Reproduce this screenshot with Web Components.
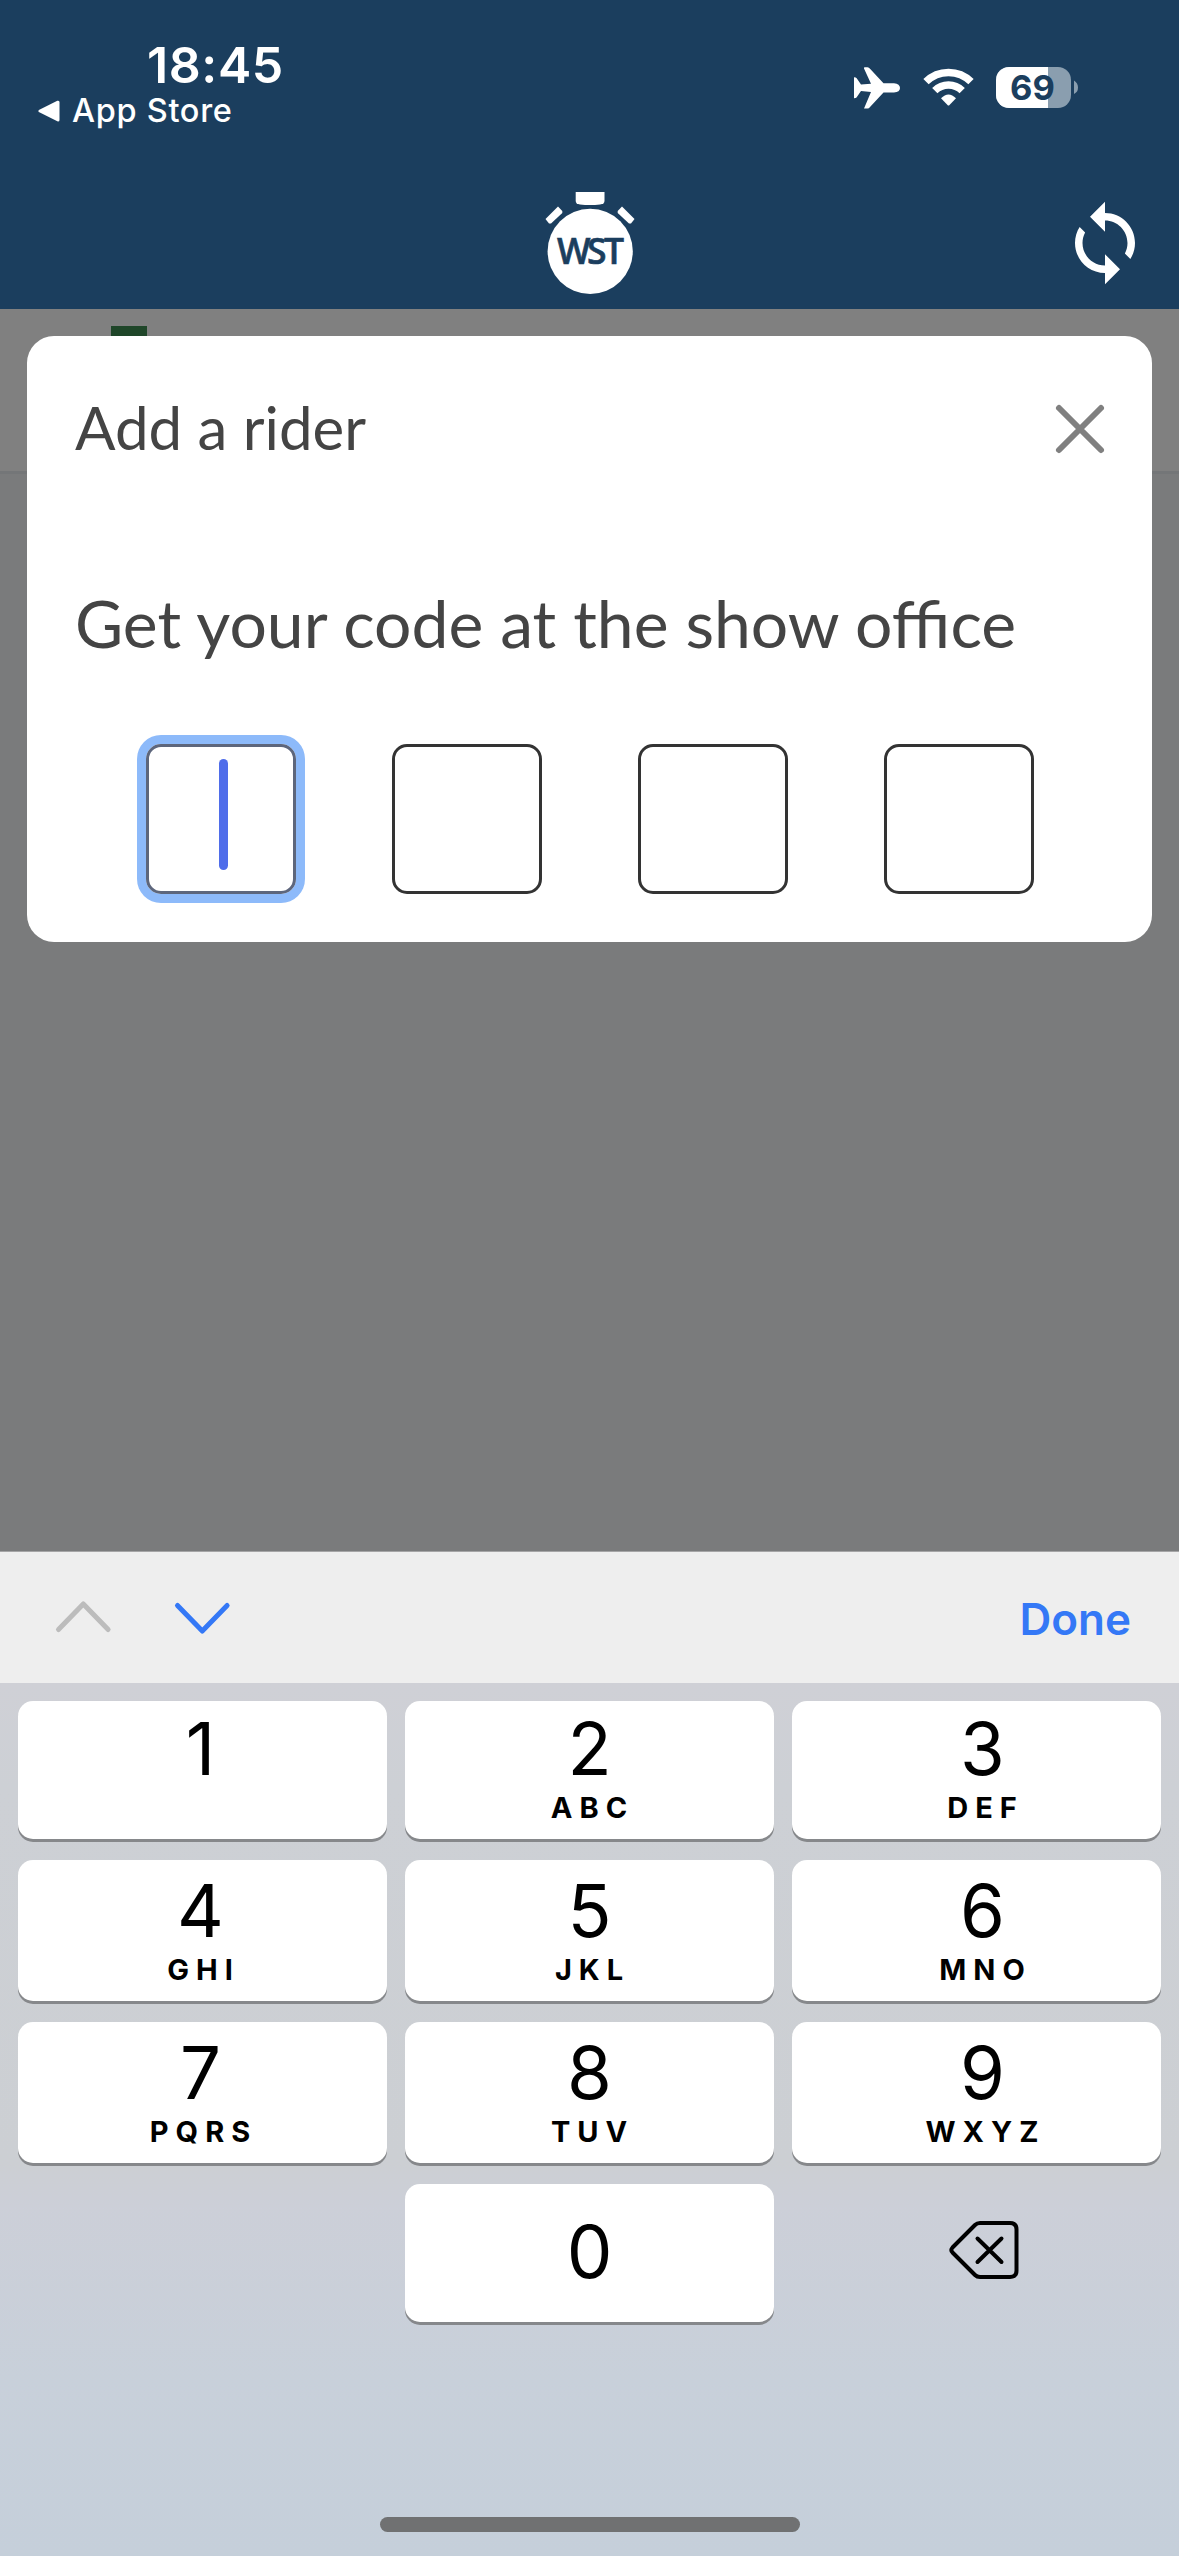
<!DOCTYPE html>
<html lang="en">
<head>
<meta charset="utf-8">
<title>WST</title>
<style>
  body {
    margin: 0;
    width: 1179px;
    height: 2556px;
    overflow: hidden;
    font-family: Inter, "Liberation Sans", sans-serif;
  }
</style>
</head>
<body>
<wst-app>
  <wst-status slot="top" time="18:45" back="App Store" battery="69"></wst-status>
  <wst-header slot="top"></wst-header>
  <wst-modal heading="Add a rider">
    Get your code at the show office
    <wst-code slot="fields" length="4"></wst-code>
  </wst-modal>
  <wst-keyboard slot="bottom"></wst-keyboard>
</wst-app>

<script>
class WstApp extends HTMLElement {
  constructor() {
    super();
    this.attachShadow({ mode: 'open' });
    this.shadowRoot.innerHTML = `
      <style>
        :host {
          display: flex;
          flex-direction: column;
          height: 2556px;
        }
        .top { background: #1b3e5e; height: 309px; }
        .page {
          position: relative;
          flex: 1;
          background: #7a7b7c;
        }
        .tabs {
          box-sizing: border-box;
          height: 165px;
          padding: 17px 0 0 111px;
          background: #808080;
          border-bottom: 3px solid #747678;
        }
        .flag { width: 36px; height: 40px; background: #1f4629; }
        .overlay {
          position: absolute;
          inset: 0;
          padding: 27px 27px 0;
        }
      </style>
      <div class="top"><slot name="top"></slot></div>
      <div class="page">
        <div class="tabs"><div class="flag"></div></div>
        <div class="overlay"><slot></slot></div>
      </div>
      <slot name="bottom"></slot>
    `;
  }
}
customElements.define('wst-app', WstApp);

class WstStatus extends HTMLElement {
  constructor() {
    super();
    this.attachShadow({ mode: 'open' });
  }

  connectedCallback() {
    const time = this.getAttribute('time');
    const back = this.getAttribute('back');
    const battery = this.getAttribute('battery');
    this.shadowRoot.innerHTML = `
      <style>
        :host {
          display: flex;
          justify-content: space-between;
          box-sizing: border-box;
          height: 180px;
          padding: 40px 100px 0 38px;
          color: #fff;
        }
        .time {
          padding-left: 109px;
          font-size: 50px;
          line-height: 50px;
          font-weight: 600;
          letter-spacing: 0.6px;
        }
        .back {
          display: flex;
          align-items: center;
          gap: 12px;
          margin-top: 4px;
          font-size: 32.5px;
          line-height: 33px;
          font-weight: 500;
          letter-spacing: 0.7px;
        }
        .icons { display: flex; align-items: flex-start; padding-top: 26px; }
        svg { display: block; }
        .wifi { margin: 2px 22px 0 23px; }
        .plane { margin-top: 1px; }
      </style>
      <div>
        <div class="time">${time}</div>
        <div class="back">
          <svg width="22" height="22" viewBox="0 0 22 22"><path d="M2 11 L20 2.200 V20 Z" fill="#fff" stroke="#fff" stroke-width="3" stroke-linejoin="round"/></svg>
          <span>${back}</span>
        </div>
      </div>
      <div class="icons">
        <svg class="plane" width="46" height="42" viewBox="0 0 46 42" fill="#fff">
          <path d="M10 1.500 Q9.500 .3 11 .3 H13.500 Q15 .5 16 1.700 L29.500 16.300 H40 Q46 17 46 21 Q46 25 40 25.500 H29.500 L16 40 Q15 41.500 13.500 41.500 H10 L17 25 L7 24 L2.500 30.500 Q2 31.300 0 31.300 V10.300 Q2 10.300 2.700 11.200 L7 17.500 L17 16.800 Z"/>
        </svg>
        <svg class="wifi" width="51" height="38" viewBox="0 0 51 38" fill="none" stroke="#fff" stroke-width="7.500">
          <path d="M3 13.700 A32 32 0 0 1 48 13.700"/>
          <path d="M11.800 22.700 A19.500 19.500 0 0 1 39.200 22.700"/>
          <path d="M18 30.300 Q25.500 22.500 33 30.300 L26.500 37 Q25.500 38 24.500 37 Z" fill="#fff" stroke="none"/>
        </svg>
        <svg width="83" height="42" viewBox="0 0 83 42">
          <defs><clipPath id="b"><rect y="1" width="75" height="41" rx="13"/></clipPath></defs>
          <g clip-path="url(#b)">
            <rect width="75" height="42" fill="#8a9eaf"/>
            <rect width="52" height="42" fill="#fff"/>
          </g>
          <path d="M78 14.500 Q82 17 82 21.500 Q82 26 78 28 Z" fill="#8a9eaf"/>
          <text x="36.500" y="34" text-anchor="middle" font-size="34.500" font-weight="650" fill="#1b3e5e">${battery}</text>
        </svg>
      </div>
    `;
  }
}
customElements.define('wst-status', WstStatus);

class WstHeader extends HTMLElement {
  constructor() {
    super();
    this.attachShadow({ mode: 'open' });
    this.shadowRoot.innerHTML = `
      <style>
        :host {
          display: grid;
          grid-template-columns: 1fr 100px 1fr;
          height: 129px;
        }
        svg { display: block; }
        .sync { justify-self: end; margin: 18px 29px 0 0; }
      </style>
      <span></span>
      <svg width="100" height="120" viewBox="0 0 100 120" fill="#fff">
        <circle cx="50.200" cy="71.300" r="42.600"/>
        <path d="M35.700 12 H64.500 V21 Q64.500 24 60 24.500 Q50 25.500 40 24.500 Q35.700 24 35.700 21 Z"/>
        <path d="M5.500 39 L18 26.500 L22.300 31 V33 L11 43.500 H9 Z"/>
        <path d="M94.500 39 L82 26.500 L77.700 31 V33 L89 43.500 H91 Z"/>
        <text x="17" y="84" font-family="Open Sans, sans-serif" font-size="35.500" font-weight="600" fill="#1b3e5e" stroke="#1b3e5e" stroke-width=".6"><tspan>W</tspan><tspan dx="-3.500">S</tspan><tspan dx="-2.500">T</tspan></text>
      </svg>
      <svg class="sync" width="90" height="90" viewBox="0 0 24 24" fill="#fff">
        <path d="M12 4V1L8 5l4 4V6c3.310 0 6 2.690 6 6 0 1.010-.25 1.970-.7 2.800l1.460 1.460C19.540 15.030 20 13.570 20 12c0-4.420-3.580-8-8-8zm0 14c-3.310 0-6-2.690-6-6 0-1.010.25-1.970.7-2.800L5.240 7.740C4.460 8.970 4 10.430 4 12c0 4.420 3.580 8 8 8v3l4-4-4-4v3z"/>
      </svg>
    `;
  }
}
customElements.define('wst-header', WstHeader);

class WstModal extends HTMLElement {
  constructor() {
    super();
    this.attachShadow({ mode: 'open' });
  }

  connectedCallback() {
    this.shadowRoot.innerHTML = `
      <style>
        :host {
          display: block;
          box-sizing: border-box;
          height: 606px;
          padding: 56px 46px 0 48px;
          border-radius: 27px;
          background: #fff;
          color: #444;
          font-family: Lato, "Liberation Sans", sans-serif;
        }
        .head {
          display: flex;
          justify-content: space-between;
          align-items: center;
          height: 74px;
          font-size: 60px;
          line-height: 72px;
        }
        .head span { margin-bottom: 4px; }
        .text {
          margin-top: 117px;
          font-size: 66px;
          line-height: 80px;
          white-space: nowrap;
        }
      </style>
      <div class="head">
        <span>${this.getAttribute('heading')}</span>
        <svg width="52" height="52" viewBox="0 0 52 52" stroke="#808080" stroke-width="6" stroke-linecap="round"><path d="M5 5 L47 47 M47 5 L5 47"/></svg>
      </div>
      <div class="text"><slot></slot></div>
      <slot name="fields"></slot>
    `;
  }
}
customElements.define('wst-modal', WstModal);

class WstCode extends HTMLElement {
  constructor() {
    super();
    this.attachShadow({ mode: 'open' });
  }

  connectedCallback() {
    const length = parseInt(this.getAttribute('length')) || 4;
    let boxes = '';
    for (let i = 0; i < length; i++) {
      boxes += i === 0 ? '<div class="box focus"><i></i></div>' : '<div class="box"></div>';
    }
    this.shadowRoot.innerHTML = `
      <style>
        :host { display: flex; gap: 96px; padding: 81px 0 0 71px; }
        .box {
          box-sizing: border-box;
          width: 150px;
          height: 150px;
          border: 3px solid #333;
          border-radius: 15px;
        }
        .focus {
          border-color: #5d667c;
          box-shadow: 0 0 0 9px #8dbafa;
        }
        i {
          display: block;
          width: 9px;
          height: 111px;
          margin: 12px 0 0 70px;
          border-radius: 4.5px;
          background: #4f6dea;
        }
      </style>
      ${boxes}
    `;
  }
}
customElements.define('wst-code', WstCode);

class WstKey extends HTMLElement {
  constructor() {
    super();
    this.attachShadow({ mode: 'open' });
  }

  connectedCallback() {
    const letters = this.getAttribute('letters');
    this.shadowRoot.innerHTML = `
      <style>
        :host {
          display: flex;
          flex-direction: column;
          align-items: center;
          justify-content: flex-end;
          gap: 8px;
          box-sizing: border-box;
          padding-bottom: 16px;
          border-radius: 15px;
          background: #fff;
          box-shadow: 0 3px 0 #86888b;
          color: #000;
        }
        :host([digit="0"]) { justify-content: center; padding: 0 0 3px; }
        :host([side="left"]) { padding-right: 4px; }
        :host([side="right"]) { padding-left: 12px; }
        b { font-size: 72.5px; line-height: 72px; font-weight: 370; }
        span {
          height: 30px;
          padding-left: 6px;
          font-size: 29px;
          line-height: 30px;
          font-weight: 650;
          letter-spacing: 7px;
        }
      </style>
      <b>${this.getAttribute('digit')}</b>
      ${letters === null ? '' : `<span>${letters}</span>`}
    `;
  }
}
customElements.define('wst-key', WstKey);

class WstKeyboard extends HTMLElement {
  constructor() {
    super();
    this.attachShadow({ mode: 'open' });
  }

  connectedCallback() {
    const letters = ['', 'ABC', 'DEF', 'GHI', 'JKL', 'MNO', 'PQRS', 'TUV', 'WXYZ'];
    const sides = ['left', 'middle', 'right'];
    const keys = letters.map((text, i) =>
      `<wst-key digit="${i + 1}" letters="${text}" side="${sides[i % 3]}"></wst-key>`
    ).join('');

    this.shadowRoot.innerHTML = `
      <style>
        :host {
          display: flex;
          flex-direction: column;
          height: 1005px;
        }
        .bar {
          display: flex;
          align-items: center;
          box-sizing: border-box;
          height: 132px;
          padding: 3px 48px 0 53px;
          border-top: 1px solid #a5a5a6;
          background: #eee;
          color: #3478f6;
        }
        .bar svg { margin: 0 59px 3px 0; }
        .done {
          margin-left: auto;
          font-size: 44px;
          font-weight: 600;
        }
        .pad {
          flex: 1;
          display: flex;
          flex-direction: column;
          justify-content: space-between;
          align-items: center;
          padding: 18px 18px 24px;
          background: linear-gradient(#cfd0d6 0, #cdd0d5 12%, #cccfd3 55%, #cccfd8 60%, #c8d0da 80%, #c5cfda 100%);
        }
        .keys {
          display: grid;
          grid-template-columns: repeat(3, 369px);
          grid-template-rows: 138px 141px 141px 138px;
          gap: 21px 18px;
        }
        .del { place-self: center; padding: 0 0 6px 14px; }
        .home { width: 420px; height: 15px; border-radius: 8px; background: #707172; }
        svg { display: block; }
      </style>
      <div class="bar">
        <svg width="60" height="40" viewBox="0 0 60 40" fill="none" stroke="#bcbcbc" stroke-width="5" stroke-linecap="round" stroke-linejoin="round"><path d="M5.500 31.500 L30.300 6 L55.100 31.500"/></svg>
        <svg width="60" height="40" viewBox="0 0 60 40" fill="none" stroke="#3478f6" stroke-width="5" stroke-linecap="round" stroke-linejoin="round"><path d="M5.500 7.500 L30.300 33 L55.100 7.500"/></svg>
        <span class="done">Done</span>
      </div>
      <div class="pad">
        <div class="keys">
          ${keys}
          <span></span>
          <wst-key digit="0"></wst-key>
          <div class="del">
            <svg width="70" height="60" viewBox="0 0 70 60" fill="none" stroke="#000" stroke-width="4" stroke-linecap="round" stroke-linejoin="round">
              <path d="M31 3 H61 Q67.500 3 67.500 9.500 V50.500 Q67.500 57 61 57 H31 Q28 57 26 55 L3.500 32.500 Q1.200 30 3.500 27.500 L26 5 Q28 3 31 3 Z"/>
              <path d="M28.500 18.500 L52.500 42 M52.500 18.500 L28.500 42"/>
            </svg>
          </div>
        </div>
        <div class="home"></div>
      </div>
    `;
  }
}
customElements.define('wst-keyboard', WstKeyboard);
</script>
</body>
</html>
